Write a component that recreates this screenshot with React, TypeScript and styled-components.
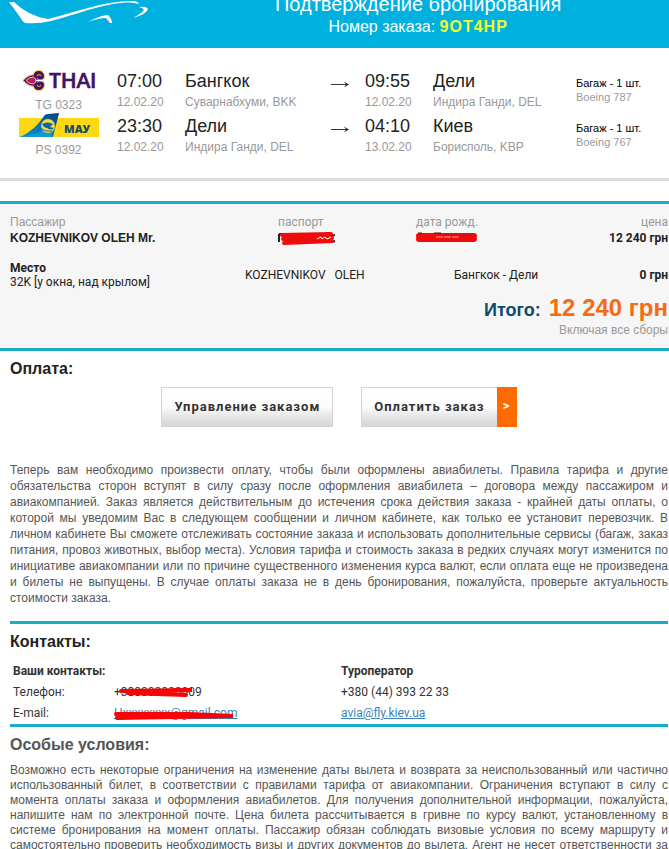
import React from "react";
import styled, { createGlobalStyle } from "styled-components";

const GlobalStyle = createGlobalStyle`
  *, *::before, *::after { box-sizing: border-box; }
  html { scrollbar-width: none; }
  body { margin: 0; background: #fff; color: #222; font: 12px/16px "Liberation Sans", Arial, sans-serif; }
  h1, h2, p { margin: 0; }
`;

const CYAN = "#1aabc9";

const Page = styled.main`
  overflow-x: hidden;
`;

const Header = styled.header`
  display: grid;
  grid-template-columns: 1fr 3fr;
  height: 48px;
  overflow: hidden;
  background: #00b1df;
  color: #fff;
`;

const PlaneLogo = styled.svg`
  display: block;
  width: 160px;
  height: 30px;
`;

const HeaderText = styled.div`
  display: flex;
  flex-direction: column;
  align-items: center;
`;

const Title = styled.h1`
  font-size: 20px;
  font-weight: 400;
  line-height: 20px;
  margin-top: -6px;
  white-space: nowrap;
`;

const OrderNumber = styled.p`
  font-size: 16px;
  line-height: 20px;
  margin-top: 3px;

  strong { color: #f3ff2b; letter-spacing: 1px; }
`;

const Segments = styled.section`
  padding: 20px 0;
  border-bottom: 3px solid #dcdcdc;
`;

const Segment = styled.div`
  display: grid;
  grid-template-columns: 117fr 68fr 145fr 35fr 68fr 143fr 93fr;
  height: 45px;
  white-space: nowrap;
`;

const Airline = styled.div`
  width: 80px;
  justify-self: center;
  text-align: center;
  line-height: 26px;
  color: #999;

  svg { display: block; }
`;

const Stop = styled.div`
  padding-top: 3px;
  line-height: 22px;
  color: #999;

  strong { display: block; font-size: 18px; font-weight: 400; line-height: 20px; color: #222; }
`;

const ArrowIcon = styled.svg`
  width: 20px;
  height: 10px;
  margin-top: 11px;
`;

const Baggage = styled.div`
  padding-top: 8px;
  font-size: 11px;
  line-height: 14px;
  color: #999;

  strong { display: block; font-weight: 400; color: #000; }
`;

const Passengers = styled.section`
  margin-top: 20px;
  padding: 10px 1px 11px 10px;
  border-top: 3px solid ${CYAN};
  border-bottom: 3px solid ${CYAN};
  background: #f6f6f6;
`;

const PassengerTable = styled.table`
  width: 100%;
  table-layout: fixed;
  border-collapse: collapse;
  font-family: Roboto, sans-serif;

  th { padding: 0; text-align: left; font-weight: 400; color: #999; }
  td { padding: 0; font-weight: 700; }
  th:first-child, td:first-child { font-family: "Liberation Sans", Arial, sans-serif; }
  th:nth-child(1) { width: 268px; }
  th:nth-child(2) { width: 138px; }
  th:last-child, td:last-child { text-align: right; }
`;

const SeatRow = styled.div`
  display: grid;
  grid-template-columns: 235fr 209fr 114fr 100fr;
  align-items: center;
  margin-top: 15px;
  font-family: Roboto, sans-serif;
  line-height: 14px;
  white-space: pre;

  strong { display: block; }
  > strong { text-align: right; }
`;

const Total = styled.div`
  display: flex;
  justify-content: flex-end;
  align-items: baseline;
  gap: 8px;
  margin-top: 6px;
  font-weight: 700;
  line-height: 26px;
  font-size: 18px;
  color: #0b4a72;

  strong { font-size: 24px; color: #f76b12; }
`;

const TotalNote = styled.p`
  text-align: right;
  line-height: 14px;
  color: #999;
`;

const Redacted = styled.span<{ $width: number }>`
  position: relative;
  display: inline-block;
  width: ${(p) => p.$width}px;
  height: 16px;
  vertical-align: top;

  svg { position: absolute; left: 0; top: 0; overflow: visible; }
`;

const Content = styled.section`
  margin: 8px 1px 0 10px;
`;

const Heading = styled.h2<{ $muted?: boolean }>`
  font-size: 16px;
  line-height: 20px;
  margin-bottom: ${(p) => (p.$muted ? "8px" : "0")};
  color: ${(p) => (p.$muted ? "#555" : "#222")};
`;

const Actions = styled.div`
  display: flex;
  justify-content: center;
  gap: 28px;
  margin: 8px 0 35px;
`;

const ActionButton = styled.button`
  display: flex;
  height: 40px;
  padding: 0;
  border: 1px solid #d3d3d3;
  background: linear-gradient(#fff 0%, #fcfcfc 50%, #e2e2e2 80%, #d8d8d8 100%);
  color: #333;
  font: 700 13px/38px Roboto, sans-serif;
  letter-spacing: 1px;
  white-space: nowrap;
  cursor: pointer;
`;

const ButtonLabel = styled.span`
  padding: 0 12px;
`;

const ButtonMark = styled.span`
  width: 20px;
  margin: -1px -1px -1px 0;
  align-self: stretch;
  background: #ff6a00;
  color: #fff;
`;

const Paragraph = styled.p<{ $leading: number; $continues?: boolean }>`
  line-height: ${(p) => p.$leading}px;
  text-align: justify;
  text-align-last: ${(p) => (p.$continues ? "justify" : "auto")};
  color: #555;
`;

const ContactSection = styled.section`
  margin: 15px 1px 0 10px;
  padding-top: 8px;
  border-top: 3px solid ${CYAN};
  border-bottom: 3px solid ${CYAN};
`;

const ContactTable = styled.table`
  width: 100%;
  margin-top: 9px;
  table-layout: fixed;
  border-collapse: collapse;
  font-family: Roboto, sans-serif;
  line-height: 21px;
  color: #333;

  th, td { padding: 0 0 0 3px; text-align: left; }
  a { color: #3b83b5; }
`;

const ThaiLogo = () => (
  <svg width="80" height="24" viewBox="0 0 80 24" role="img" aria-label="THAI">
    <g fill="none" stroke="#e6ad2b" strokeWidth="5.500" strokeLinecap="round">
      <path d="M17 8 C16 4 23 4 23 8 C23 10 21 10 20 9" />
      <path d="M17 17 C16 21 23 21 23 17 C23 15 21 15 20 16" />
    </g>
    <path d="M4 12.500 Q10 6 16 7 L20 12.500 L16 18 Q10 19 4 12.500Z" fill="#43145f" stroke="#e6ad2b" />
    <g fill="none" stroke="#43145f" strokeWidth="4" strokeLinecap="round">
      <path d="M17 8 C16 4 23 4 23 8 C23 10 21 10 20 9" />
      <path d="M17 17 C16 21 23 21 23 17 C23 15 21 15 20 16" />
    </g>
    <path d="M18 8 Q20 5 22 8 M18 17 Q20 20 22 17" fill="none" stroke="#e6ad2b" strokeWidth="1.200" />
    <path d="M7 12.500 Q10 9 14 9 Q17 10 17 12.500 Q17 15 14 16 Q10 16 7 12.500Z" fill="#c41472" stroke="#f0c37a" />
    <path d="M17 12.500 H26" stroke="#fff" strokeWidth="1.500" />
    <text x="30" y="20" fontFamily="Lato, sans-serif" fontWeight="700" fontSize="20" fill="#43145f" stroke="#43145f" strokeWidth="0.400">THAI</text>
  </svg>
);

const MauLogo = () => (
  <svg width="80" height="24" viewBox="0 0 80 24" role="img" aria-label="МАУ">
    <defs>
      <linearGradient id="tail" x1="0" y1="1" x2="1" y2="0">
        <stop offset="0" stopColor="#168fd0" />
        <stop offset="0.500" stopColor="#0872b6" />
        <stop offset="1" stopColor="#063f78" />
      </linearGradient>
    </defs>
    <path d="M0 5 H80 V24 H0Z" fill="#ffd814" />
    <path d="M1 24 C13 18 19 12 25 3 Q26 1 29 1 L40 0 L34 24Z" fill="url(#tail)" />
    <path d="M4 24 Q18 21 25 17 L34 18 L32 24Z" fill="#1499d6" />
    <circle cx="29" cy="13" r="7" fill="#f3d94a" />
    <path d="M23 11 Q29 8 34 11 L31 14 L35 15 Q32 18 28 15 Q25 15 23 11Z" fill="#1266a2" />
    <path d="M22 15 Q26 19 33 18" fill="none" stroke="#1266a2" />
    <text x="45" y="20" fontFamily="Open Sans, sans-serif" fontWeight="800" fontSize="11" fill="#154f65">МАУ</text>
  </svg>
);

const Arrow = () => (
  <ArrowIcon viewBox="0 0 20 10" aria-hidden="true">
    <path d="M1 5.500 H17" stroke="#333" fill="none" />
    <path d="M14 2.500 L19 5.500 L14 8.500 L16 5.500Z" fill="#333" />
  </ArrowIcon>
);

interface Flight {
  logo: React.ReactNode;
  code: string;
  stops: string[][];
  plane: string;
}

const flights: Flight[] = [
  { logo: <ThaiLogo />, code: "TG 0323", plane: "Boeing 787", stops: [["07:00", "12.02.20", "Бангкок", "Суварнабхуми, BKK"], ["09:55", "12.02.20", "Дели", "Индира Ганди, DEL"]] },
  { logo: <MauLogo />, code: "PS 0392", plane: "Boeing 767", stops: [["23:30", "12.02.20", "Дели", "Индира Ганди, DEL"], ["04:10", "13.02.20", "Киев", "Борисполь, KBP"]] },
];

const StopCells = ({ data }: { data: string[] }) => (
  <>
    <Stop><strong>{data[0]}</strong>{data[1]}</Stop>
    <Stop><strong>{data[2]}</strong>{data[3]}</Stop>
  </>
);

export default function App() {
  return (
    <Page>
      <GlobalStyle />
      <Header>
        <PlaneLogo viewBox="0 0 160 30" aria-hidden="true">
          <path d="M9 2 L14 2 Q28 16 48 19 C76 12 104 1 132 1 Q138 1 139 4 Q134 2 125 2.500 C101 4 75 15 51 21 Q39 24 25 23 Q22 21 20 17Z" fill="#fff" />
          <path d="M88 22 Q101 15 108 15 Q112 19 112 23 L110 23 L106 18 Q99 18 88 22Z" fill="#fff" />
          <path d="M139 7 Q146 6 148 9 Q147 14 133 18 Q142 13 144 10 Q143 8 139 7Z" fill="#fff" />
        </PlaneLogo>
        <HeaderText>
          <Title>Подтверждение бронирования</Title>
          <OrderNumber>Номер заказа: <strong>9OT4HP</strong></OrderNumber>
        </HeaderText>
      </Header>

      <Segments>
        {flights.map((f) => (
          <Segment key={f.code}>
            <Airline>{f.logo}{f.code}</Airline>
            <StopCells data={f.stops[0]} />
            <Arrow />
            <StopCells data={f.stops[1]} />
            <Baggage><strong>Багаж - 1 шт.</strong>{f.plane}</Baggage>
          </Segment>
        ))}
      </Segments>

      <Passengers>
        <PassengerTable>
          <thead>
            <tr><th>Пассажир</th><th>паспорт</th><th>дата рожд.</th><th>цена</th></tr>
          </thead>
          <tbody>
            <tr>
              <td>KOZHEVNIKOV OLEH Mr.</td>
              <td>
                <Redacted $width={58}>
                  <svg width="58" height="16" aria-label="скрыто">
                    <path d="M1 4 V12 M1 4 H5 M53 6 L57 5 M54 12 L57 11" stroke="#222" strokeWidth="2" />
                    <path d="M4 5 L53 4 L5 9 L54 8 L6 13 L54 11" fill="none" stroke="#f00b0b" strokeWidth="4" strokeLinecap="round" strokeLinejoin="round" />
                    <path d="M39 9 L43 7 L44 9 L47 7 L49 9 L53 7" fill="none" stroke="#fff" />
                  </svg>
                </Redacted>
              </td>
              <td>
                <Redacted $width={62}>
                  <svg width="62" height="16" aria-label="скрыто">
                    <path d="M3 6 H58 M3 9 H58" fill="none" stroke="#f00b0b" strokeWidth="6" strokeLinecap="round" />
                    <path d="M2 3 H6 M18 3 H25" stroke="#4b1515" strokeWidth="1" />
                    <path d="M29 5 H59" stroke="#9b2222" strokeDasharray="4 2" />
                    <path d="M20 7 H43" stroke="#ff9a9a" strokeDasharray="7 1" />
                  </svg>
                </Redacted>
              </td>
              <td>12 240 грн</td>
            </tr>
          </tbody>
        </PassengerTable>
        <SeatRow>
          <span><strong>Место</strong>32K [у окна, над крылом]</span>
          <span>{"KOZHEVNIKOV   OLEH"}</span>
          <span>Бангкок - Дели</span>
          <strong>0 грн</strong>
        </SeatRow>
        <Total>Итого: <strong>12 240 грн</strong></Total>
        <TotalNote>Включая все сборы</TotalNote>
      </Passengers>

      <Content>
        <Heading>Оплата:</Heading>
        <Actions>
          <ActionButton type="button"><ButtonLabel>Управление заказом</ButtonLabel></ActionButton>
          <ActionButton type="button"><ButtonLabel>Оплатить заказ</ButtonLabel><ButtonMark>&gt;</ButtonMark></ActionButton>
        </Actions>
        <Paragraph $leading={16}>
          Теперь вам необходимо произвести оплату, чтобы были оформлены авиабилеты. Правила тарифа и другие обязательства сторон вступят в силу сразу после оформления авиабилета – договора между пассажиром и авиакомпанией. Заказ является действительным до истечения срока действия заказа - крайней даты оплаты, о которой мы уведомим Вас в следующем сообщении и личном кабинете, как только ее установит перевозчик. В личном кабинете Вы сможете отслеживать состояние заказа и использовать дополнительные сервисы (багаж, заказ питания, провоз животных, выбор места). Условия тарифа и стоимость заказа в редких случаях могут изменится по инициативе авиакомпании или по причине существенного изменения курса валют, если оплата еще не произведена и билеты не выпущены. В случае оплаты заказа не в день бронирования, пожалуйста, проверьте актуальность стоимости заказа.
        </Paragraph>
      </Content>

      <ContactSection>
        <Heading>Контакты:</Heading>
        <ContactTable>
          <colgroup><col width="101" /><col width="227" /><col /></colgroup>
          <tbody>
            <tr><th colSpan={2}>Ваши контакты:</th><th>Туроператор</th></tr>
            <tr>
              <td>Телефон:</td>
              <td>
                <Redacted $width={90}>
                  +380000000009
                  <svg width="90" height="21" aria-hidden="true">
                    <path d="M7 9 L78 8 L13 11 L72 13" fill="none" stroke="#f50505" strokeWidth="4" strokeLinecap="round" />
                  </svg>
                </Redacted>
              </td>
              <td>+380 (44) 393 22 33</td>
            </tr>
            <tr>
              <td>E-mail:</td>
              <td>
                <Redacted $width={122}>
                  <a href="#email">Hxxxxxxxx@gmail.com</a>
                  <svg width="122" height="21" aria-hidden="true">
                    <path d="M2 11 L75 11 L119 13 L3 15" fill="none" stroke="#f50505" strokeWidth="4" strokeLinecap="round" />
                  </svg>
                </Redacted>
              </td>
              <td><a href="mailto:avia@fly.kiev.ua">avia@fly.kiev.ua</a></td>
            </tr>
          </tbody>
        </ContactTable>
      </ContactSection>

      <Content>
        <Heading $muted>Особые условия:</Heading>
        <Paragraph $leading={15} $continues>
          Возможно есть некоторые ограничения на изменение даты вылета и возврата за неиспользованный или частично использованный билет, в соответствии с правилами тарифа от авиакомпании. Ограничения вступают в силу с момента оплаты заказа и оформления авиабилетов. Для получения дополнительной информации, пожалуйста, напишите нам по электронной почте. Цена билета рассчитывается в гривне по курсу валют, установленному в системе бронирования на момент оплаты. Пассажир обязан соблюдать визовые условия по всему маршруту и самостоятельно проверить необходимость визы и других документов до вылета. Агент не несет ответственности за
        </Paragraph>
      </Content>
    </Page>
  );
}
